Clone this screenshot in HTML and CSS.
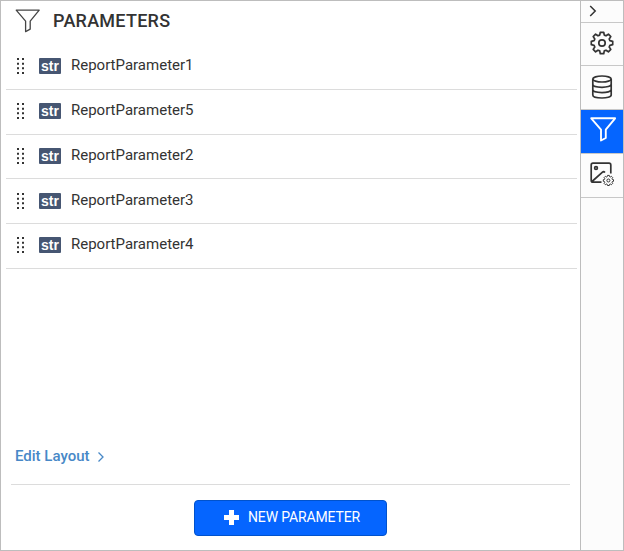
FILE: index.html
```html
<!DOCTYPE html>
<html lang="en">
<head>
<meta charset="utf-8">
<title>Parameters</title>
<link rel="stylesheet" href="styles.css">
</head>
<body>
<svg class="defs" aria-hidden="true">
  <symbol id="funnel" viewBox="0 0 26 24"><path d="M1.2 1.2H24.2L15.2 12.2V20.2L10.6 22.6V12.2Z" fill="none" stroke="currentColor" stroke-linejoin="round"/></symbol>
  <symbol id="grip" viewBox="0 0 8 16"><path d="M0 0h2v2h-2zM5 0h2v2h-2zM0 4.7h2v2h-2zM5 4.7h2v2h-2zM0 9.3h2v2h-2zM5 9.3h2v2h-2zM0 14h2v2h-2zM5 14h2v2h-2z" fill="currentColor"/></symbol>
</svg>
<div class="designer">
  <main class="panel">
    <header class="head"><svg class="head-icon"><use href="#funnel"/></svg><h1>PARAMETERS</h1></header>
    <ul class="list">
      <li><svg class="grip"><use href="#grip"/></svg><span class="type">str</span><span class="name">ReportParameter1</span></li>
      <li><svg class="grip"><use href="#grip"/></svg><span class="type">str</span><span class="name">ReportParameter5</span></li>
      <li><svg class="grip"><use href="#grip"/></svg><span class="type">str</span><span class="name">ReportParameter2</span></li>
      <li><svg class="grip"><use href="#grip"/></svg><span class="type">str</span><span class="name">ReportParameter3</span></li>
      <li><svg class="grip"><use href="#grip"/></svg><span class="type">str</span><span class="name">ReportParameter4</span></li>
    </ul>
    <a class="edit"><span>Edit Layout</span><svg width="8" height="12" viewBox="0 0 8 12"><path d="M1.5 1.5L6 6L1.5 10.5" fill="none" stroke="currentColor" stroke-width="1.3"/></svg></a>
    <footer class="foot">
      <button class="new"><svg width="15" height="15" viewBox="0 0 15 15"><path d="M5 0h5v5h5v5h-5v5h-5v-5h-5v-5h5z" fill="currentColor"/></svg><span>NEW PARAMETER</span></button>
    </footer>
  </main>
  <nav class="rail">
    <div class="tab collapse"><svg width="8" height="12" viewBox="0 0 8 12"><path d="M1.2 1L6.2 6L1.2 11" fill="none" stroke="currentColor" stroke-width="1.5"/></svg></div>
    <div class="tab"><svg class="gear" width="24" height="24" viewBox="0 0 24 24"><path d="M9.7 4.1L10.3 1.3H13.7L14.3 4.1L16 4.8L18.4 3.2L20.8 5.6L19.2 8L19.9 9.7L22.7 10.3V13.7L19.9 14.3L19.2 16L20.8 18.4L18.4 20.8L16 19.2L14.3 19.9L13.7 22.7H10.3L9.7 19.9L8 19.2L5.6 20.8L3.2 18.4L4.8 16L4.1 14.3L1.3 13.7V10.3L4.1 9.7L4.8 8L3.2 5.6L5.6 3.2L8 4.8Z"/><circle cx="12" cy="12" r="3.2"/></svg></div>
    <div class="tab"><svg class="data" width="22" height="24" viewBox="0 0 22 24"><ellipse cx="11" cy="4" rx="9.2" ry="3"/><path d="M1.8 4V20C1.8 24 20.2 24 20.2 20V4M1.8 9.3C1.8 13.3 20.2 13.3 20.2 9.3M1.8 14.6C1.8 18.6 20.2 18.6 20.2 14.6"/></svg></div>
    <div class="tab active"><svg class="rail-funnel"><use href="#funnel"/></svg></div>
    <div class="tab"><svg class="image" width="24" height="24" viewBox="0 0 24 24"><path d="M11.5 20.2H3C1.8 20.2 1.2 19.5 1.2 18.5V3C1.2 1.8 1.8 1.2 3 1.2H19C20.2 1.2 20.8 1.8 20.8 3V11.5M2 19.5L12.5 10.2C13.4 9.4 14 9.5 15 10.5"/><circle cx="6" cy="6" r="1.4"/><path class="mini" d="M17.2 14.7L17.5 13.4H19.3L19.6 14.7L20.3 15L21.4 14.3L22.7 15.6L22 16.7L22.3 17.4L23.5 17.7V19.3L22.3 19.6L22 20.3L22.7 21.4L21.4 22.7L20.3 22L19.6 22.3L19.3 23.5H17.5L17.2 22.3L16.5 22L15.4 22.7L14.1 21.4L14.8 20.3L14.5 19.6L13.3 19.3V17.7L14.5 17.4L14.8 16.7L14.1 15.6L15.4 14.3L16.5 15Z"/><circle class="mini" cx="18.4" cy="18.5" r="1.5"/></svg></div>
  </nav>
</div>
</body>
</html>
```
FILE: styles.css
```css
* { box-sizing: border-box; }
body { margin: 0; font-family: Roboto, "Liberation Sans", sans-serif; color: #333; }
svg { display: block; flex: none; }
.defs { display: none; }
.designer { display: flex; width: 624px; height: 551px; border: 1px solid #bdbdbd; background: #fff; }
.panel { flex: 1; display: flex; flex-direction: column; min-width: 0; }
.head { display: flex; align-items: flex-start; height: 44.3px; padding: 8px 0 0 14px; }
.head-icon { width: 26px; height: 24px; stroke-width: 1.3; color: #444; }
h1 { margin: 1px 0 0 12px; font-size: 18px; line-height: 22px; font-weight: 500; letter-spacing: .25px; }
.list { list-style: none; margin: 0 3px 0 5px; padding: 0; }
.list li { display: flex; align-items: flex-start; height: 44.7px; padding: 12.7px 0 0 11px; border-bottom: 1px solid #dcdcdc; }
.grip { width: 8px; height: 16px; color: #333; }
.type { width: 22px; height: 16px; margin-left: 14px; border-radius: 1px; background: #465672; color: #fff; font: bold 14px/16px "Liberation Sans", sans-serif; text-align: center; }
.name { margin: -3px 0 0 10px; font-size: 15px; line-height: 20px; }
.list li:nth-child(3), .list li:nth-child(4) { padding-top: 13.3px; }
.edit { display: flex; align-items: center; gap: 7px; height: 20px; margin: auto 0 18px 14px; color: #4788c7; font-size: 15px; font-weight: 500; }
.edit svg { margin-top: 1px; }
.foot { display: flex; justify-content: center; align-items: flex-start; height: 66px; margin: 0 10px; padding-top: 15px; border-top: 1px solid #dcdcdc; }
.new { display: flex; align-items: center; gap: 9px; width: 193px; height: 36px; margin: 0; padding: 0 0 2px 29px; border: 1px solid #0052cc; border-radius: 4px; background: #0565ff; color: #fff; font: 14px Roboto, sans-serif; letter-spacing: -.15px; }
.rail { width: 43px; border-left: 1px solid #bdbdbd; background: #fcfcfc; }
.tab { display: flex; justify-content: center; align-items: center; height: 44px; padding-bottom: 2px; border-bottom: 1px solid #c8c8c8; }
.collapse { height: 22px; justify-content: flex-start; padding: 0 0 2px 8px; }
.collapse + .tab { height: 43px; }
.active { background: #0565ff; color: #fff; }
.gear, .data, .image { fill: none; stroke: #333; stroke-width: 1.7; stroke-linejoin: round; }
.image { margin-top: -2px; }
.mini { stroke-width: 1; }
.rail-funnel { width: 27px; height: 25px; stroke-width: 1.8; margin: -2px 0 0 2px; }
```
